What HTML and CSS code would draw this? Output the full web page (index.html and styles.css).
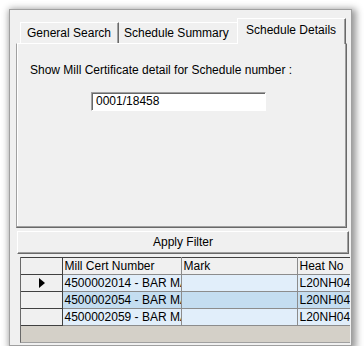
FILE: index.html
```html
<!DOCTYPE html>
<html>

<head>
	<title>Schedule Details</title>
	<link rel="stylesheet" href="styles.css">
</head>

<body>
	<div class="window">
		<div class="tabs">
			<div class="tab tab-general">General Search</div>
			<div class="tab tab-summary">Schedule Summary</div>
			<div class="tab tab-details active">Schedule Details</div>
		</div>
		<div class="panel">
			<p class="label">Show Mill Certificate detail for Schedule number :</p>
			<div class="input">0001/18458</div>
		</div>
		<div class="button">Apply Filter</div>
		<div class="grid">
			<table>
				<colgroup>
					<col class="c-rowhead">
					<col class="c-cert">
					<col class="c-mark">
					<col class="c-heat">
				</colgroup>
				<tr class="head">
					<td class="rowhead"></td>
					<td>Mill Cert Number</td>
					<td>Mark</td>
					<td>Heat No</td>
				</tr>
				<tr class="row">
					<td class="rowhead"><span class="arrow"></span></td>
					<td>4500002014 - BAR MARK</td>
					<td></td>
					<td>L20NH04</td>
				</tr>
				<tr class="row selected">
					<td class="rowhead"></td>
					<td>4500002054 - BAR MARK</td>
					<td></td>
					<td>L20NH04</td>
				</tr>
				<tr class="row">
					<td class="rowhead"></td>
					<td>4500002059 - BAR MARK</td>
					<td></td>
					<td>L20NH04</td>
				</tr>
			</table>
		</div>
	</div>
</body>

</html>
```

FILE: styles.css
```css
body {
	background-color: #ffffff;
	color: #000000;
	font-family: "Liberation Sans", Arial, sans-serif;
	font-size: 12px;
	margin: 0;
	padding: 9px 0 0 9px;
}

.window {
	background-color: #f0f0f0;
	border: 1px solid #a0a0a0;
	box-shadow: 2px 2px 7px 2px rgba(0, 0, 0, 0.42);
	box-sizing: border-box;
	width: 343px;
	height: 337px;
	padding: 8px 2px 0 6px;
}

.tabs {
	display: flex;
	align-items: flex-end;
	height: 25px;
	padding-left: 4px;
}

.tab {
	box-sizing: border-box;
	height: 21px;
	line-height: 20px;
	border-top: 1px solid #ffffff;
	border-left: 1px solid #ffffff;
	border-right: 1px solid #696969;
	box-shadow: inset -1px 0 #a0a0a0;
	white-space: nowrap;
}

.tab-general {
	width: 99px;
	padding-left: 6px;
}

.tab-summary {
	width: 120px;
	padding-left: 5px;
	border-left: none;
}

.tab-details {
	width: 109px;
	padding-left: 8px;
}

.tab.active {
	height: 26px;
	line-height: 22px;
	margin-left: -2px;
	margin-bottom: -1px;
	background-color: #f0f0f0;
	position: relative;
}

.panel {
	box-sizing: border-box;
	width: 331px;
	height: 185px;
	border-top: 1px solid #ffffff;
	border-left: 1px solid #a0a0a0;
	border-right: 1px solid #696969;
	border-bottom: 1px solid #696969;
	box-shadow: inset -1px -1px #a0a0a0, inset 1px 0 #ffffff;
	padding: 19px 0 0 13px;
}

.label {
	margin: 0;
	line-height: 14px;
}

.input {
	box-sizing: border-box;
	width: 175px;
	height: 19px;
	margin: 15px 0 0 61px;
	background-color: #ffffff;
	border-top: 1px solid #a0a0a0;
	border-left: 1px solid #a0a0a0;
	border-right: 1px solid #ffffff;
	border-bottom: 1px solid #ffffff;
	box-shadow: inset 1px 1px #696969;
	padding: 0 4px;
	line-height: 17px;
}

.button {
	box-sizing: border-box;
	width: 332px;
	height: 23px;
	margin: 3px 0 0 1px;
	border-top: 1px solid #ffffff;
	border-left: 1px solid #ffffff;
	border-right: 1px solid #696969;
	border-bottom: 1px solid #696969;
	box-shadow: inset -1px -1px #a0a0a0;
	text-align: center;
	line-height: 21px;
}

.grid {
	box-sizing: border-box;
	width: 330px;
	height: 86px;
	margin: 3px 0 0 4px;
	background-color: #d4d0c8;
	border-left: 1px solid #696969;
	border-bottom: 1px solid #a0a0a0;
	overflow: hidden;
}

.grid table {
	border-collapse: collapse;
	table-layout: fixed;
	width: 337px;
}

.c-rowhead {
	width: 41px;
}

.c-cert {
	width: 119px;
}

.c-mark {
	width: 116px;
}

.c-heat {
	width: 61px;
}

.grid td {
	height: 16px;
	padding: 0 0 0 2px;
	border: 1px solid #8c8c8c;
	white-space: nowrap;
	overflow: hidden;
	line-height: 15px;
}

.grid tr:first-child td {
	border-top: 1px solid #404040;
}

.grid td:first-child {
	border-left: none;
}

.grid td.rowhead {
	background-color: #f0f0f0;
	border-top: 1px solid #404040;
	border-bottom: 1px solid #404040;
	border-right: 1px solid #404040;
	text-align: center;
}

.head td {
	background-color: #f0f0f0;
}

.row td {
	background-color: #e1eefa;
}

.row.selected td {
	background-color: #c4ddf0;
}

.row td.rowhead {
	background-color: #f0f0f0;
}

.arrow {
	display: inline-block;
	width: 0;
	height: 0;
	border-top: 5px solid transparent;
	border-bottom: 5px solid transparent;
	border-left: 6px solid #000000;
	vertical-align: middle;
}
```
